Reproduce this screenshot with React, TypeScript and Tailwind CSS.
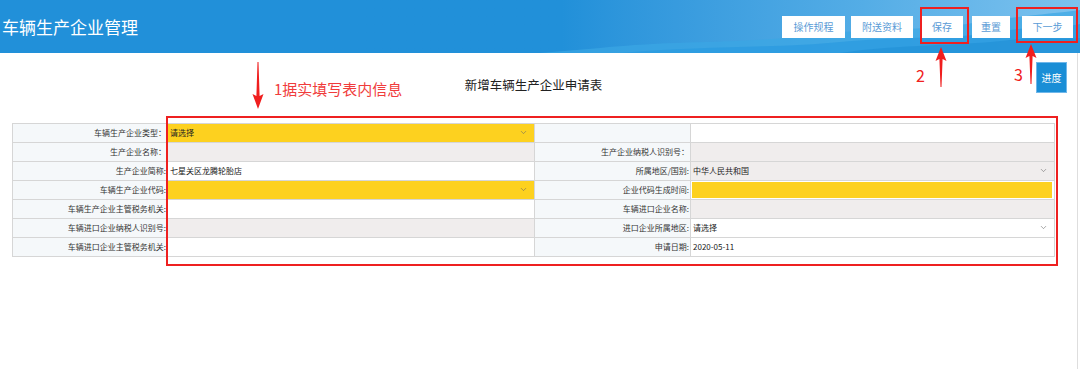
import React from 'react';
import { ChevronDown } from 'lucide-react';

type Cell = {
  label: string;
  kind: 'white' | 'grey' | 'yellow' | 'labelEmpty';
  value?: string;
  select?: boolean;
  inset?: boolean;
};

const rows: [Cell, Cell][] = [
  [
    { label: '车辆生产企业类型：', kind: 'yellow', value: '请选择', select: true },
    { label: '', kind: 'white' },
  ],
  [
    { label: '生产企业名称：', kind: 'grey' },
    { label: '生产企业纳税人识别号：', kind: 'grey' },
  ],
  [
    { label: '生产企业简称:', kind: 'white', value: '七星关区龙腾轮胎店' },
    { label: '所属地区/国别:', kind: 'grey', value: '中华人民共和国', select: true },
  ],
  [
    { label: '车辆生产企业代码:', kind: 'yellow', select: true },
    { label: '企业代码生成时间:', kind: 'yellow', inset: true },
  ],
  [
    { label: '车辆生产企业主管税务机关:', kind: 'white' },
    { label: '车辆进口企业名称:', kind: 'grey' },
  ],
  [
    { label: '车辆进口企业纳税人识别号:', kind: 'grey' },
    { label: '进口企业所属地区:', kind: 'white', value: '请选择', select: true },
  ],
  [
    { label: '车辆进口企业主管税务机关:', kind: 'white' },
    { label: '申请日期:', kind: 'white', value: '2020-05-11' },
  ],
];

const bgFor = (c: Cell) =>
  c.kind === 'yellow' ? 'bg-[#fdd11f]' : c.kind === 'grey' ? 'bg-[#f0eded]' : 'bg-white';

const InputCell: React.FC<{ c: Cell }> = ({ c }) => {
  if (c.inset) {
    return (
      <div className="bg-white p-[1px] pr-[2px]">
        <div className="h-full bg-[#fdd11f]" />
      </div>
    );
  }
  return (
    <div className={`flex items-center justify-between pl-[2px] pr-[6px] text-[8px] text-[#222] ${bgFor(c)}`}>
      <span>{c.value}</span>
      {c.select && <ChevronDown size={9} strokeWidth={1.5} className="text-[#666]" />}
    </div>
  );
};

const Label: React.FC<{ text: string }> = ({ text }) => (
  <div className="flex items-center justify-end bg-[#f5f8fa] pr-[1px] text-[8px] text-[#333]">{text}</div>
);

// tapered red arrow pointing up
const UpArrow: React.FC<{ className: string }> = ({ className }) => (
  <svg className={className} width="12" height="40" viewBox="0 0 12 40">
    <polygon points="6,0 11.5,14 7.6,12 6.5,40 5.5,40 4.4,12 0.5,14" fill="#f01e1e" />
  </svg>
);

const App: React.FC = () => {
  return (
    <div className="relative h-[369px] w-[1080px] overflow-hidden bg-white" style={{ fontFamily: '"Noto Sans CJK SC", "Noto Sans", sans-serif' }}>
      {/* header */}
      <header className="relative flex h-[53px] items-center justify-between overflow-hidden bg-gradient-to-r from-[#2190d9] from-[52%] via-[#54ade6] via-[80%] to-[#7cc2ee]">
        <svg className="absolute bottom-0 right-0" width="540" height="53" viewBox="0 0 540 53" preserveAspectRatio="none">
          <path d="M0,53 L60,48 C140,40 200,44 260,36 C320,28 380,32 440,22 C480,16 510,14 540,10 L540,53 Z" fill="#3aa6e4" opacity="0.7" />
          <path d="M80,53 C160,46 240,48 300,42 C360,36 420,40 470,30 C500,26 520,28 540,24 L540,53 Z" fill="#2c9be0" opacity="0.8" />
          <path d="M300,53 C360,44 420,46 470,40 C500,36 520,40 540,38 L540,53 Z" fill="#1f8fd6" opacity="0.6" />
        </svg>
        <h1 className="relative pl-[2px] text-[17px] text-white">车辆生产企业管理</h1>
        <nav className="relative mr-[7px] flex items-center gap-[6px] text-[10px] text-[#5a9bd6]">
          <button className="h-[22px] w-[63px] bg-white">操作规程</button>
          <button className="h-[22px] w-[62px] bg-white">附送资料</button>
          <button className="ml-[2px] h-[22px] w-[42px] bg-white">保存</button>
          <button className="ml-[3px] h-[22px] w-[38px] bg-white">重置</button>
          <button className="ml-[6px] h-[22px] w-[51px] bg-white">下一步</button>
        </nav>
        <div className="absolute left-[920px] top-[7px] h-[37px] w-[49px] border-2 border-[#ee2020]" />
        <div className="absolute left-[1016px] top-[7px] h-[36px] w-[62px] border-2 border-[#ee2020]" />
      </header>

      {/* body */}
      <main className="relative h-[316px] w-[1078px] border-r border-[#dedede]">
        <UpArrow className="absolute left-[935px] top-[-6px]" />
        <UpArrow className="absolute left-[1025px] top-[-9px]" />
        <span className="absolute left-[916px] top-[10px] text-[16px] text-[#f02020]">2</span>
        <span className="absolute left-[1014px] top-[9px] text-[16px] text-[#f02020]">3</span>

        <button className="absolute right-[10px] top-[9px] h-[31px] w-[31px] border border-[#6fb7ea] bg-[#1a8ed6] text-[10px] text-white">进度</button>

        <svg className="absolute left-[252px] top-[9px]" width="12" height="47" viewBox="0 0 12 47">
          <polygon points="5.5,0 6.5,0 7.6,34 11.5,32 6,47 0.5,32 4.4,34" fill="#f01e1e" />
        </svg>
        <span className="absolute left-[274px] top-[25px] text-[15px] text-[#f03c3c]">1据实填写表内信息</span>

        <div className="ml-[12px] w-[1043px] pt-[23px]">
          <h2 className="text-center text-[12.5px] text-[#222]">新增车辆生产企业申请表</h2>
          <div className="mt-[28px] grid grid-cols-[154px_366px_155px_363px] gap-px border border-[#d6d6d6] bg-[#d6d6d6] [grid-auto-rows:18px]">
            {rows.map(([a, b], i) => (
              <React.Fragment key={i}>
                <Label text={a.label} />
                <InputCell c={a} />
                <Label text={b.label} />
                <InputCell c={b} />
              </React.Fragment>
            ))}
          </div>
        </div>

        <div className="absolute left-[166px] top-[63px] h-[150px] w-[892px] border-2 border-[#ee2020]" />
      </main>
    </div>
  );
};

export default App;
